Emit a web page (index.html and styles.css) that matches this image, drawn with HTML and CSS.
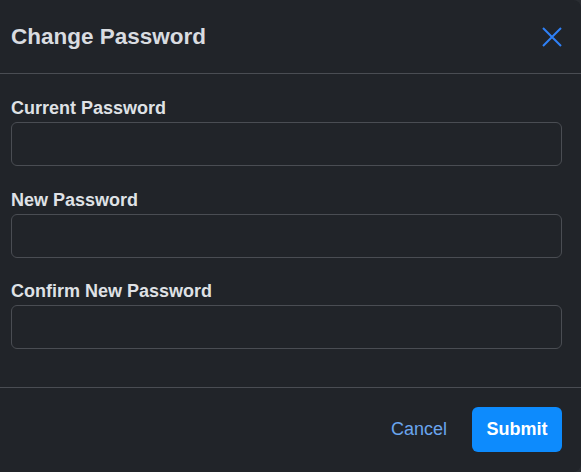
FILE: index.html
```html
<!DOCTYPE html>
<html lang="en">
<head>
<meta charset="utf-8">
<title>Change Password</title>
<link rel="stylesheet" href="styles.css">
</head>
<body>
<div class="modal">
  <div class="modal-header">
    <h1 class="modal-title">Change Password</h1>
    <button class="close" aria-label="Close">
      <svg width="20" height="20" viewBox="0 0 20 20"><path d="M1 1 L19 19 M19 1 L1 19" stroke="#2f80f7" stroke-width="2" fill="none"/></svg>
    </button>
  </div>
  <div class="modal-body">
    <div class="field">
      <label>Current Password</label>
      <input type="password">
    </div>
    <div class="field">
      <label>New Password</label>
      <input type="password">
    </div>
    <div class="field">
      <label>Confirm New Password</label>
      <input type="password">
    </div>
  </div>
  <div class="modal-footer">
    <button class="btn-link">Cancel</button>
    <button class="btn-primary">Submit</button>
  </div>
</div>
</body>
</html>
```
FILE: styles.css
```css
html, body {
  margin: 0;
  padding: 0;
  height: 100%;
  background: #2a2d32;
}
.modal {
  box-sizing: border-box;
  height: 472px;
  background: #212429;
  border-radius: 0 8px 8px 0;
  font-family: "Liberation Sans", Arial, sans-serif;
  color: #dfe1e5;
  display: flex;
  flex-direction: column;
}
.modal-header {
  height: 74px;
  box-sizing: border-box;
  border-bottom: 1px solid #4a4d53;
  display: flex;
  align-items: center;
  justify-content: space-between;
  padding: 0 19px 0 11px;
  flex: none;
}
.modal-title {
  margin: 0;
  font-size: 22.5px;
  font-weight: 700;
  color: #d9dce0;
}
.close {
  background: none;
  border: 0;
  padding: 0;
  width: 20px;
  height: 20px;
  display: block;
}
.close svg { display: block; }
.modal-body {
  flex: 1;
  padding: 22px 19px 0 11px;
}
.field {
  display: flex;
  flex-direction: column;
  margin-bottom: 21.5px;
}
.field label {
  font-size: 18px;
  font-weight: 700;
  line-height: 24px;
  margin-bottom: 2px;
}
.field input {
  box-sizing: border-box;
  height: 44px;
  background: #212429;
  border: 1px solid #4a4d53;
  border-radius: 6px;
}
.modal-footer {
  flex: none;
  border-top: 1px solid #4a4d53;
  padding: 19px 19px 20px 11px;
  display: flex;
  justify-content: flex-end;
  align-items: center;
  gap: 25px;
}
.btn-link {
  background: none;
  border: 0;
  font-family: inherit;
  font-size: 18px;
  color: #6aa5ee;
  padding: 0;
}
.btn-primary {
  font-family: inherit;
  font-size: 18px;
  font-weight: 700;
  color: #fff;
  background: #0d8bfd;
  border: 0;
  border-radius: 6px;
  height: 45px;
  width: 90px;
}
```
